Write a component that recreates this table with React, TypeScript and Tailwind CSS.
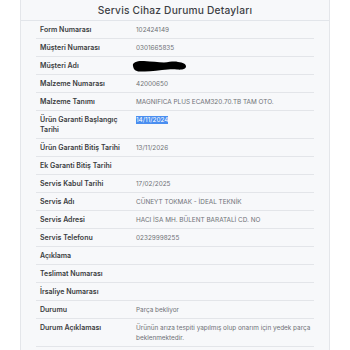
import React from "react";

type Row = { label: string; value?: React.ReactNode };

const Redacted = () => (
    <span className="relative block h-[10px]">
        <svg width="58" height="14" viewBox="0 0 58 14" className="absolute -left-[6px] -top-[2px]">
            <path
                d="M3 7 C2 3 8 1.5 14 2 C22 2.5 28 3 34 3.5 C40 3 44 2 48 3 C53 3.5 56 5 56 7.5 C56 10 52 11 47 10.5 C42 10 38 10.5 32 11 C24 12 16 12.5 10 12.5 C5 12.5 3.5 10 3 7 Z"
                fill="#000"
            />
        </svg>
    </span>
);

const rows: Row[] = [
    { label: "Form Numarası", value: "102424149" },
    { label: "Müşteri Numarası", value: "0301665835" },
    { label: "Müşteri Adı", value: <Redacted /> },
    { label: "Malzeme Numarası", value: "42000650" },
    { label: "Malzeme Tanımı", value: "MAGNIFICA PLUS ECAM320.70.TB TAM OTO." },
    {
        label: "Ürün Garanti Başlangıç Tarihi",
        value: <span className="bg-[#4a8ef0] text-white">14/11/2024</span>,
    },
    { label: "Ürün Garanti Bitiş Tarihi", value: "13/11/2026" },
    { label: "Ek Garanti Bitiş Tarihi" },
    { label: "Servis Kabul Tarihi", value: "17/02/2025" },
    { label: "Servis Adı", value: "CÜNEYT TOKMAK - İDEAL TEKNİK" },
    { label: "Servis Adresi", value: "HACI İSA MH. BÜLENT BARATALİ CD. NO" },
    { label: "Servis Telefonu", value: "02329998255" },
    { label: "Açıklama" },
    { label: "Teslimat Numarası" },
    { label: "İrsaliye Numarası" },
    { label: "Durumu", value: "Parça bekliyor" },
    {
        label: "Durum Açıklaması",
        value: "Ürünün arıza tespiti yapılmış olup onarım için yedek parça beklenmektedir.",
    },
];

const App = () => {
    return (
        <div className="w-[350px] h-[350px] bg-white overflow-hidden font-['Inter',sans-serif]">
            <div className="ml-[20px] w-[310px] h-[350px] bg-[#f7f8fa] border-x border-[#e4e6ea]">
                {/* Header */}
                <div className="h-[21px] flex items-center justify-center border-b border-[#e2e5ea]">
                    <h1 className="text-[10.2px] leading-none tracking-[0.02em] font-medium text-[#3d3f44]">
                        Servis Cihaz Durumu Detayları
                    </h1>
                </div>

                {/* Table */}
                <div className="ml-[15px] w-[278px]">
                    {rows.map((r) => (
                        <div key={r.label} className="flex border-b border-[#e3e5e9]">
                            <div className="w-[96px] shrink-0 px-[4px] py-[3.5px] text-[7px] leading-[10px] font-semibold text-[#3a3c40]">
                                {r.label}
                            </div>
                            <div className="flex-1 pl-[4px] pr-[1px] py-[3.5px] text-[6.4px] leading-[10px] text-[#6f7277]">
                                {r.value}
                            </div>
                        </div>
                    ))}
                </div>
            </div>
        </div>
    );
};

export default App;
